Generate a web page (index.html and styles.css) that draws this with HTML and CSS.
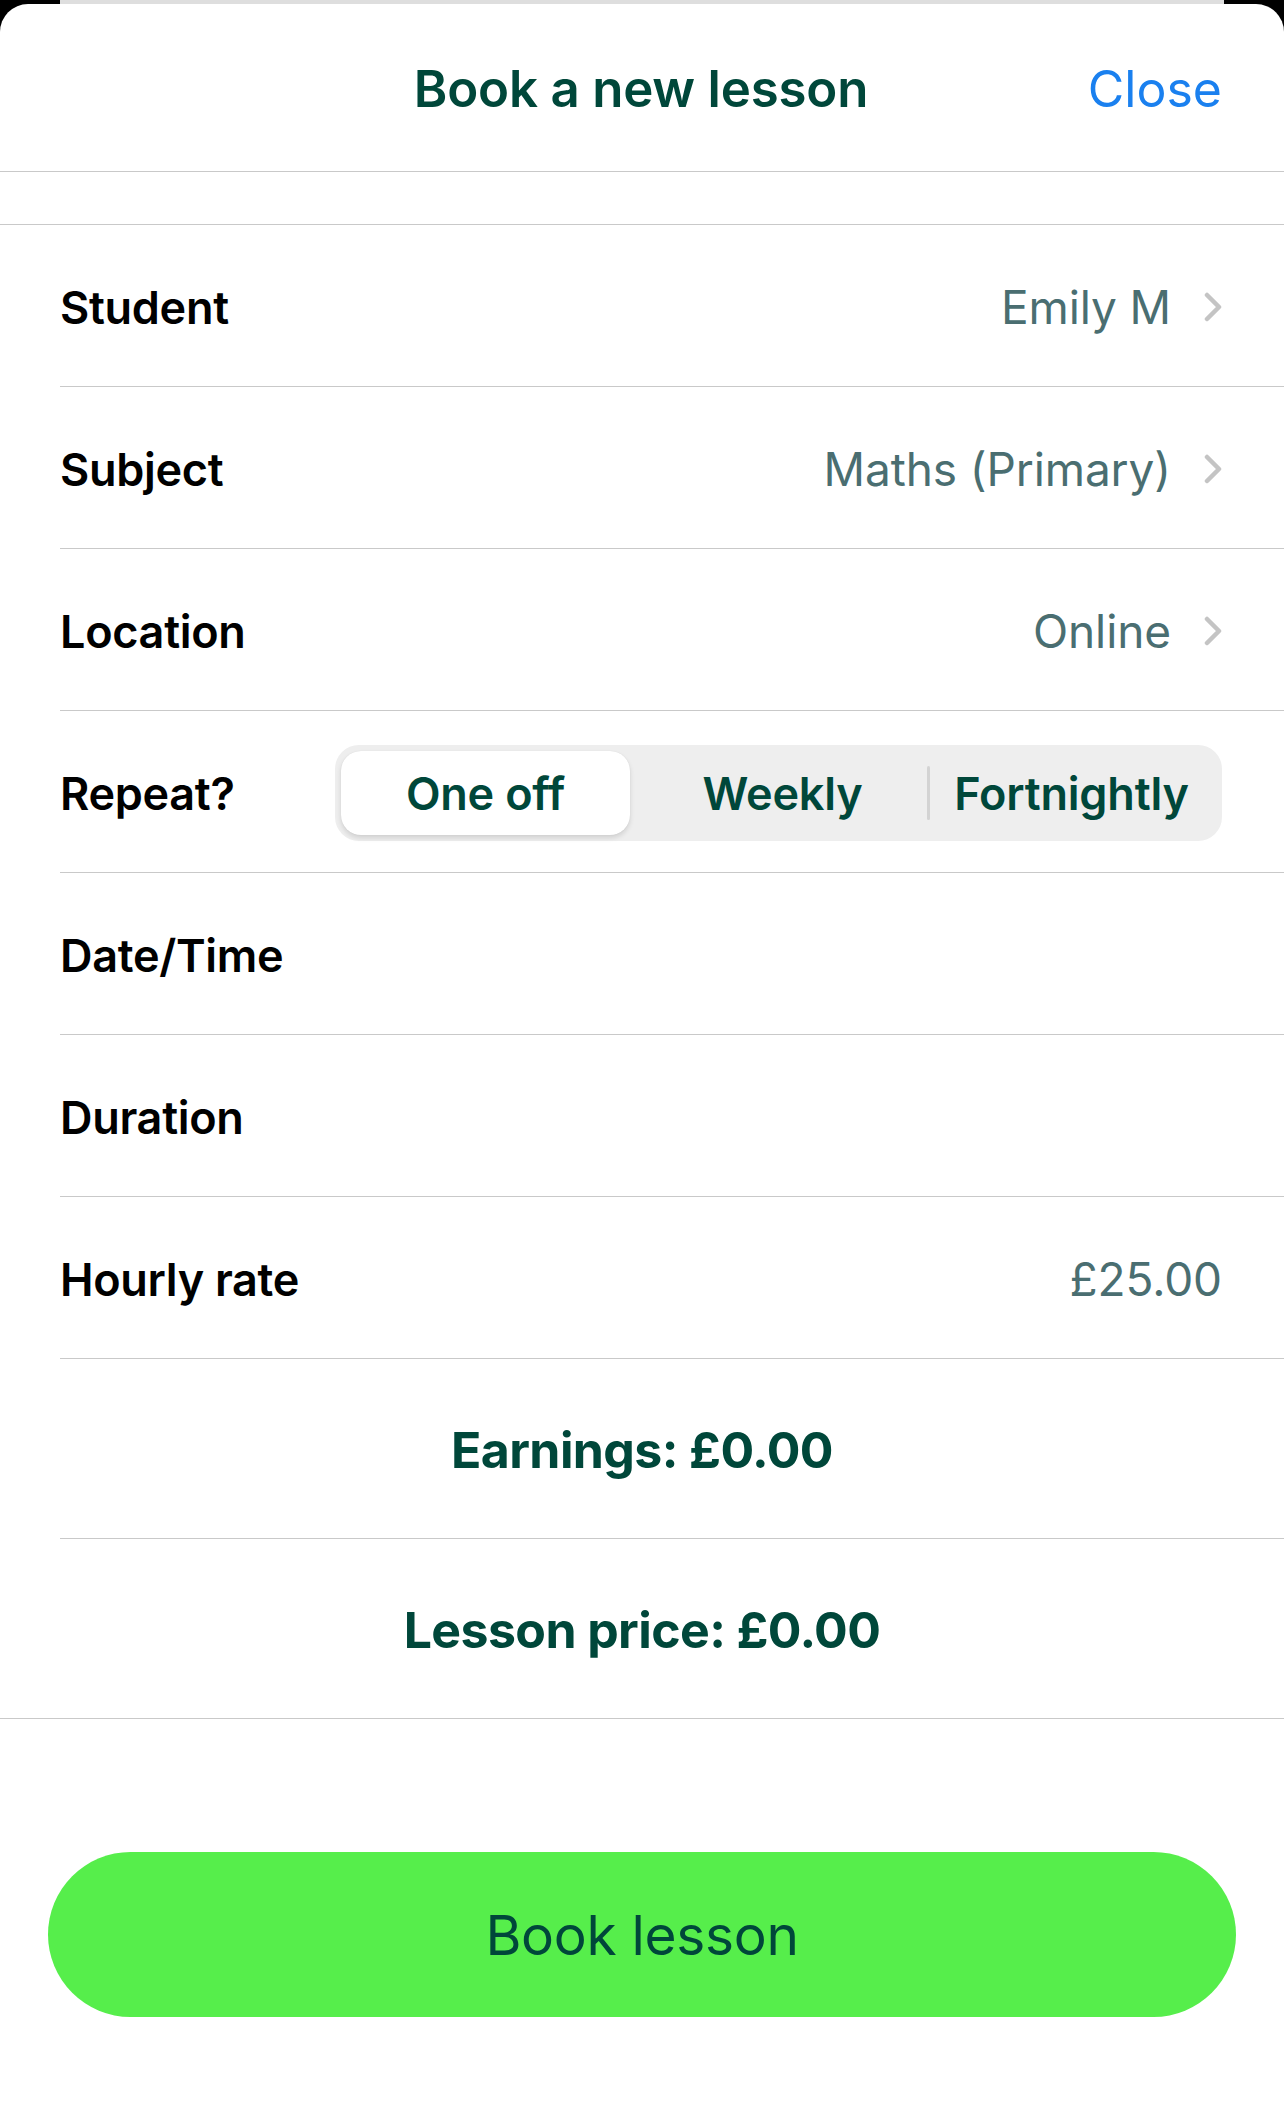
FILE: index.html
```html
<!DOCTYPE html>
<html lang="en">
<head>
<meta charset="utf-8">
<title>Book a new lesson</title>
<link rel="stylesheet" href="styles.css">
</head>
<body>
<div class="backcard"></div>
<main class="sheet">
  <header class="header">
    <span class="header-side"></span>
    <h1 class="title">Book a new lesson</h1>
    <a class="close" href="#">Close</a>
  </header>
  <div class="spacer"></div>

  <section class="form">
    <div class="row">
      <span class="label">Student</span>
      <span class="value">Emily M</span>
      <svg class="chev" viewBox="0 0 18 30" width="18" height="30"><polyline points="3,3 15,15 3,27" /></svg>
    </div>
    <div class="row">
      <span class="label">Subject</span>
      <span class="value">Maths (Primary)</span>
      <svg class="chev" viewBox="0 0 18 30" width="18" height="30"><polyline points="3,3 15,15 3,27" /></svg>
    </div>
    <div class="row">
      <span class="label">Location</span>
      <span class="value">Online</span>
      <svg class="chev" viewBox="0 0 18 30" width="18" height="30"><polyline points="3,3 15,15 3,27" /></svg>
    </div>
    <div class="row">
      <span class="label">Repeat?</span>
      <div class="segmented">
        <span class="seg seg-active">One off</span>
        <span class="seg">Weekly</span>
        <span class="seg seg-divided">Fortnightly</span>
      </div>
    </div>
    <div class="row">
      <span class="label">Date/Time</span>
    </div>
    <div class="row">
      <span class="label">Duration</span>
    </div>
    <div class="row">
      <span class="label">Hourly rate</span>
      <span class="value value-plain">£25.00</span>
    </div>
    <div class="row row-summary">
      <span class="summary">Earnings: £0.00</span>
    </div>
    <div class="row row-summary row-last">
      <span class="summary">Lesson price: £0.00</span>
    </div>
  </section>

  <div class="actions">
    <button class="book-btn" type="button">Book lesson</button>
  </div>
</main>
</body>
</html>
```

FILE: styles.css
```css
* { box-sizing: border-box; }

html, body {
  margin: 0;
  padding: 0;
}

body {
  background: #000;
  font-family: Inter, "Noto Sans", "Liberation Sans", sans-serif;
  width: 1284px;
  min-height: 2123px;
}

.backcard {
  height: 4px;
  margin: 0 60px 0 60px;
  background: #dedede;
}

.sheet {
  background: #fff;
  border-radius: 28px 28px 0 0;
  min-height: 2119px;
  display: flex;
  flex-direction: column;
}

.header {
  height: 168px;
  display: grid;
  grid-template-columns: 1fr auto 1fr;
  align-items: center;
  padding: 2px 62px 0 60px;
  border-bottom: 1px solid #c9c9c9;
}

.title {
  margin: 0;
  font-size: 51px;
  font-weight: 600;
  color: #00473a;
  letter-spacing: -0.2px;
}

.close {
  justify-self: end;
  font-size: 50px;
  font-weight: 400;
  color: #1a80ef;
  text-decoration: none;
}

.spacer {
  height: 53px;
  border-bottom: 1px solid #c9c9c9;
}

.form {
  display: flex;
  flex-direction: column;
}

.row {
  height: 162px;
  margin-left: 60px;
  padding-right: 62px;
  padding-top: 3px;
  display: flex;
  align-items: center;
  border-bottom: 1px solid #c9c9c9;
}

.label {
  font-size: 45px;
  font-weight: 600;
  color: #000;
  letter-spacing: -0.3px;
  flex: 0 0 auto;
}

.value {
  margin-left: auto;
  font-size: 46px;
  font-weight: 400;
  color: #4a6e71;
  letter-spacing: -0.1px;
}

.chev {
  margin-left: 33px;
  fill: none;
  stroke: #c4c4c4;
  stroke-width: 4.5;
  stroke-linecap: round;
  stroke-linejoin: round;
  flex: 0 0 auto;
}

.segmented {
  margin-left: auto;
  width: 887px;
  height: 96px;
  background: #eeeeee;
  border-radius: 24px;
  padding: 6px;
  display: flex;
}

.seg {
  flex: 1 1 0;
  display: flex;
  align-items: center;
  justify-content: center;
  font-size: 45px;
  font-weight: 600;
  color: #00473a;
  letter-spacing: -0.2px;
  border-radius: 20px;
  position: relative;
}

.seg-active {
  background: #fff;
  box-shadow: 0 3px 5px rgba(0, 0, 0, 0.12), 0 0 1px rgba(0, 0, 0, 0.1);
  margin-right: 8px;
}

.seg-divided::before {
  content: "";
  position: absolute;
  left: 0;
  top: 15px;
  bottom: 15px;
  width: 3px;
  background: #d3d3d3;
  border-radius: 2px;
}

.value-plain {
  margin-left: auto;
}

.row-summary {
  height: 180px;
  justify-content: center;
  padding-right: 60px;
}

.row-last {
  margin-left: 0;
  padding-left: 0;
  padding-right: 0;
}

.summary {
  font-size: 50px;
  font-weight: 700;
  color: #00473a;
  letter-spacing: -0.6px;
}

.actions {
  padding: 133px 48px 0 48px;
}

.book-btn {
  display: block;
  width: 100%;
  height: 165px;
  border: 0;
  border-radius: 83px;
  background: #56ee4b;
  color: #00473a;
  font-family: Inter, "Noto Sans", "Liberation Sans", sans-serif;
  font-size: 55px;
  font-weight: 400;
  letter-spacing: -0.3px;
  cursor: pointer;
}
```
